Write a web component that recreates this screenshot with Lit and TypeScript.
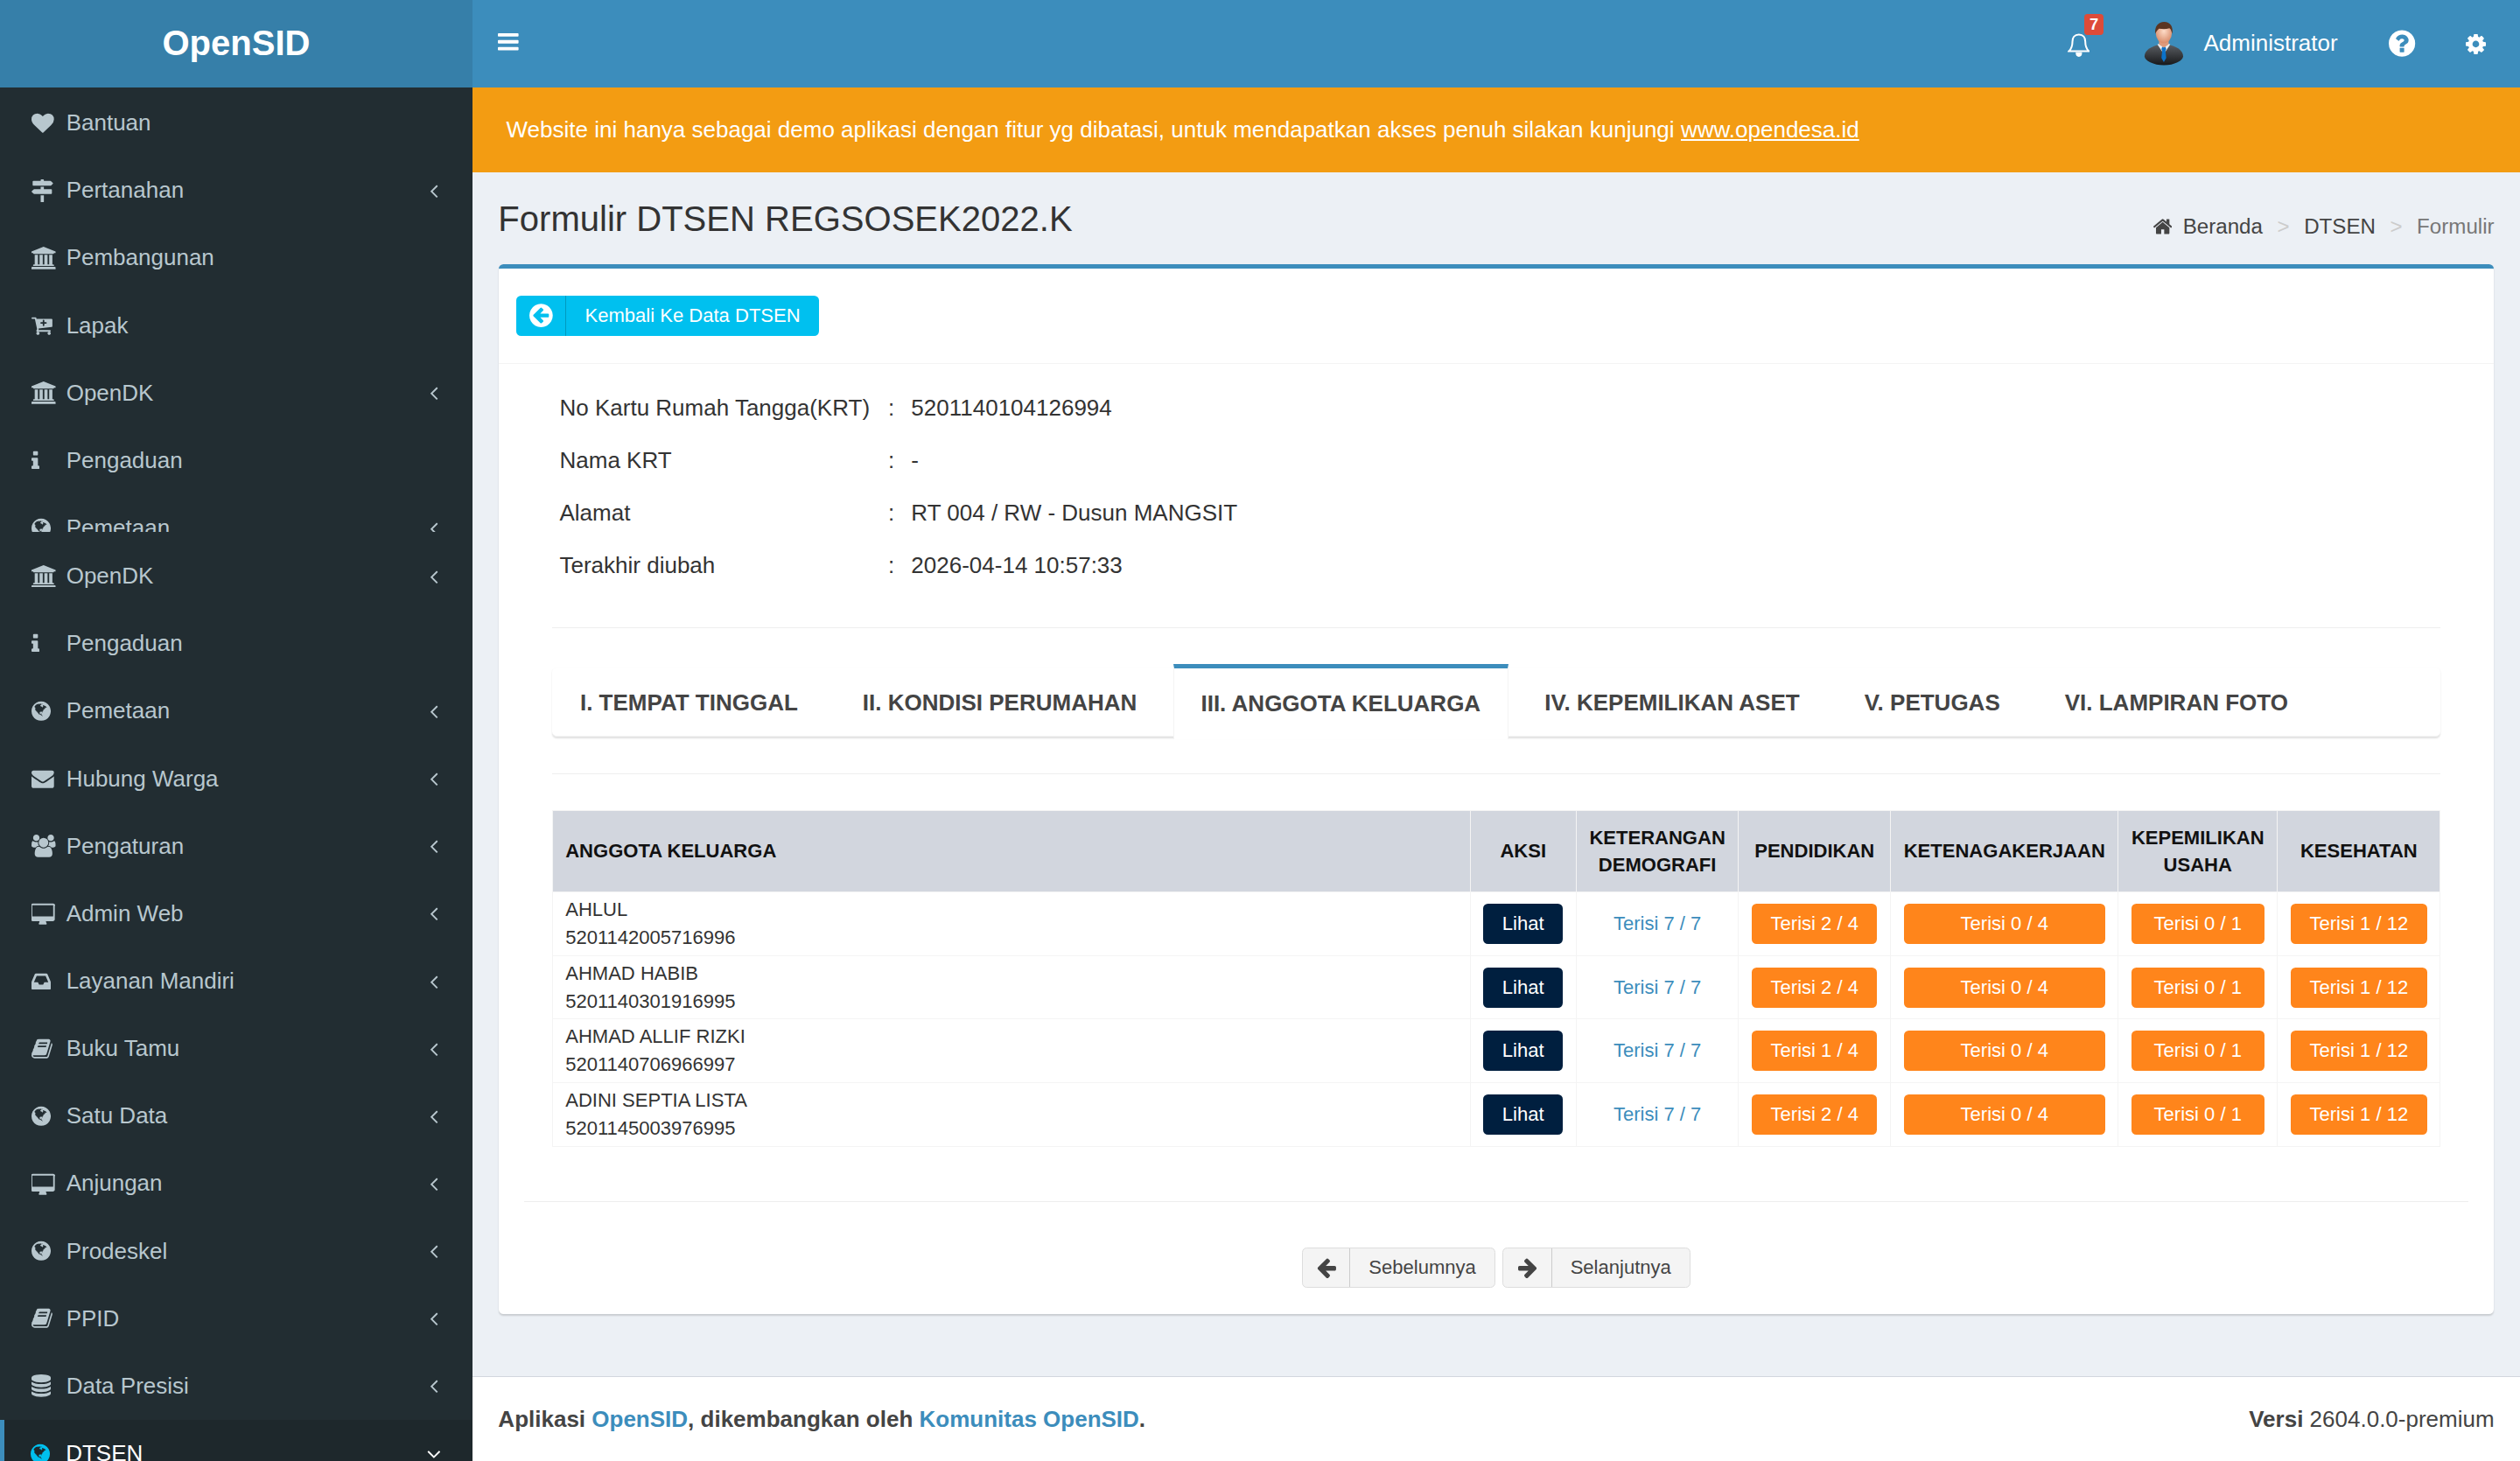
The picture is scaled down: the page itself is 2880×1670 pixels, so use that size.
import { LitElement, html, css } from 'lit'
import { customElement } from 'lit/decorators.js'

type Glyph = { d: string; x: number; w: number; y?: number }

const G: Record<string, Glyph> = {
  heart: { x: 0, w: 1792, d: 'M896 1664q-26 0-44-18l-624-602q-10-8-27.5-26t-55.5-65.5-68-97.5-53.5-121-23.5-138q0-220 127-344t351-124q62 0 126.5 21.5t120 58 95.5 68.5 76 68q36-36 76-68t95.5-68.5 120-58 126.5-21.5q224 0 351 124t127 344q0 221-229 450l-623 600q-18 18-44 18z' },
  signs: { x: 37, w: 1718, d: 'M1745 297q10 10 10 23t-10 23l-141 141q-28 28-68 28h-1344q-26 0-45-19t-19-45v-256q0-26 19-45t45-19h576v-64q0-26 19-45t45-19h128q26 0 45 19t19 45v64h512q40 0 68 28zm-977 967h256v512q0 26-19 45t-45 19h-128q-26 0-45-19t-19-45v-512zm832-480q26 0 45 19t19 45v256q0 26-19 45t-45 19h-1344q-40 0-68-28l-141-141q-10-10-10-23t10-23l141-141q28-28 68-28h512v-192h256v192h576z' },
  bank: { x: 0, w: 1920, d: 'M960 0l960 384v128h-128q0 26-20.5 45t-48.5 19h-1526q-28 0-48.5-19t-20.5-45h-128v-128zm-704 640h256v768h128v-768h256v768h128v-768h256v768h128v-768h256v768h59q28 0 48.5 19t20.5 45v64h-1664v-64q0-26 20.5-45t48.5-19h59v-768zm1595 960q28 0 48.5 19t20.5 45v128h-1920v-128q0-26 20.5-45t48.5-19h1782z' },
  cart: { x: 0, w: 1664, d: 'M1216 704q0-26-19-45t-45-19h-128v-128q0-26-19-45t-45-19-45 19-19 45v128h-128q-26 0-45 19t-19 45 19 45 45 19h128v128q0 26 19 45t45 19 45-19 19-45v-128h128q26 0 45-19t19-45zm-576 832q0 53-37.5 90.5t-90.5 37.5-90.5-37.5-37.5-90.5 37.5-90.5 90.5-37.5 90.5 37.5 37.5 90.5zm896 0q0 53-37.5 90.5t-90.5 37.5-90.5-37.5-37.5-90.5 37.5-90.5 90.5-37.5 90.5 37.5 37.5 90.5zm128-1088v512q0 24-16 42.5t-41 21.5l-1044 122q1 7 4.5 21.5t6 26.5 2.5 22q0 16-24 64h920q26 0 45 19t19 45-19 45-45 19h-1024q-26 0-45-19t-19-45q0-14 11-39.5t29.5-59.5 20.5-38l-177-823h-204q-26 0-45-19t-19-45 19-45 45-19h256q16 0 28.5 6.5t20 15.5 13 24.5 7.5 26.5 5.5 29.5 4.5 25.5h1201q26 0 45 19t19 45z' },
  info: { x: 576, w: 640, d: 'M1216 1344v128q0 26-19 45t-45 19h-512q-26 0-45-19t-19-45v-128q0-26 19-45t45-19h64v-384h-64q-26 0-45-19t-19-45v-128q0-26 19-45t45-19h384q26 0 45 19t19 45v576h64q26 0 45 19t19 45zm-128-1152v192q0 26-19 45t-45 19h-256q-26 0-45-19t-19-45v-192q0-26 19-45t45-19h256q26 0 45 19t19 45z' },
  globe: { x: 128, w: 1536, d: 'M896 128q209 0 385.5 103t279.5 279.5 103 385.5-103 385.5-279.5 279.5-385.5 103-385.5-103-279.5-279.5-103-385.5 103-385.5 279.5-279.5 385.5-103zm274 521q-2 1-9.5 9.5t-13.5 9.5q2 0 4.5-5t5-11 3.5-7q6-7 22-15 14-6 52-12 34-8 51 11-2-2 9.5-13t14.5-12q3-2 15-4.5t15-7.5l2-22q-12 1-17.5-7t-6.5-21q0 2-6 8 0-7-4.5-8t-11.5 1-9 1q-10-3-15-7.5t-8-16.5-4-15q-2-5-9.5-11t-9.5-10q-1-2-2.5-5.5t-3-6.5-4-5.5-5.5-2.5-7 5-7.5 10-4.5 5q-3-2-6-1.5t-4.5 1-4.5 3-5 3.5q-3 2-8.5 3t-8.5 2q15-5-1-11-10-4-16-3 9-4 7.5-12t-8.5-14h5q-1-4-8.5-8.5t-17.5-8.5-13-6q-8-5-34-9.5t-33-.5q-5 6-4.5 10.5t4 14 3.5 12.5q1 6-5.5 13t-6.5 12q0 7 14 15.5t10 21.5q-3 8-16 16t-16 12q-5 8-1.5 18.5t10.5 16.5q2 2 1.5 4t-3.5 4.5-5.5 4-6.5 3.5l-3 2q-11 5-20.5-6t-13.5-26q-7-25-16-30-23-8-29 1-5-13-41-26-25-9-58-4 6-1 0-15-7-15-19-12 3-6 4-17.5t1-13.5q3-13 12-23 1-1 7-8.5t9.5-13.5.5-6q35 4 50-11 5-5 11.5-17t10.5-17q9-6 14-5.5t14.5 5.5 14.5 5q14 1 15.5-11t-7.5-20q12 1 3-17-5-7-8-9-12-4-27 5-8 4 2 8-1-1-9.5 10.5t-16.5 17.5-14-5q-1-1-5.5-13.5t-9.5-13.5q-8 0-16 15 3-8-11-15t-24-8q19-12-8-27-7-4-20.5-5t-19.5 4q-5 7-5.5 11.5t5 8 10.5 5.5 11.5 4 8.5 3q14 10 8 14-2 1-8.5 3.5t-11.5 4.5-6 4q-3 4 0 14t-2 14q-5-5-9-17.5t-7-16.5q7 9-25 6l-10-1q-4 0-16 2t-20.5 1-13.5-8q-4-8 0-20 1-4 4-2-4-3-11-9.5t-10-8.5q-46 15-94 41 6 1 12-1 5-2 13-6.5t10-5.5q34-14 42-7l5-5q14 16 20 25-7-4-30-1-20 6-22 12 7 12 5 18-4-3-11.5-10t-14.5-11-15-5q-16 0-22 1-146 80-235 222 7 7 12 8 4 1 5 9t2.5 11 11.5-3q9 8 3 19 1-1 44 27 19 17 21 21 3 11-10 18-1-2-9-9t-9-4q-3 5 .5 18.5t10.5 12.5q-7 0-9.5 16t-2.5 35.5-1 23.5l2 1q-3 12 5.5 34.5t21.5 19.5q-13 3 20 43 6 8 8 9 3 2 12 7.5t15 10 10 10.5q4 5 10 22.5t14 23.5q-2 6 9.5 20t10.5 23q-1 0-2.5 1t-2.5 1q3 7 15.5 14t15.5 13q1 3 2 10t3 11 8 2q2-20-24-62-15-25-17-29-3-5-5.5-15.5t-4.5-14.5q2 0 6 1.5t8.5 3.5 7.5 4 2 3q-3 7 2 17.5t12 18.5 17 19 12 13q6 6 14 19.5t0 13.5q9 0 20 10.5t17 19.5q5 8 8 26t5 24q2 7 8.5 13.5t12.5 9.5l16 8 13 7q5 2 18.5 10.5t21.5 11.5q10 4 16 4t14.5-2.5 13.5-3.5q15-2 29 15t21 21q36 19 55 11-2 1 .5 7.5t8 15.5 9 14.5 5.5 8.5q5 6 18 15t18 15q6-4 7-9-3 8 7 20t18 10q14-3 14-32-31 15-49-18 0-1-2.5-5.5t-4-8.5-2.5-8.5 0-7.5 5-3q9 0 10-3.5t-2-12.5-4-13q-1-8-11-20t-12-15q-5 9-16 8t-16-9q0 1-1.5 5.5t-1.5 6.5q-13 0-15-1 1-3 2.5-17.5t3.5-22.5q1-4 5.5-12t7.5-14.5 4-12.5-4.5-9.5-17.5-2.5q-19 1-26 20-1 3-3 10.5t-5 11.5-9 7q-7 3-24 2t-24-5q-13-8-22.5-29t-9.5-37q0-10 2.5-26.5t3-25-5.5-24.5q3-2 9-9.5t10-10.5q2-1 4.5-1.5t4.5 0 4-1.5 3-6q-1-1-4-3-3-3-4-3 7 3 28.5-1.5t27.5 1.5q15 11 22-2 0-1-2.5-9.5t-.5-13.5q5 27 29 9 3 3 15.5 5t17.5 5q3 2 7 5.5t5.5 4.5 5-.5 8.5-6.5q10 14 12 24 11 40 19 44 7 3 11 2t4.5-9.5 0-14-1.5-12.5l-1-8v-18l-1-8q-15-3-18.5-12t1.5-18.5 15-18.5q1-1 8-3.5t15.5-6.5 12.5-8q21-19 15-35 7 0 11-9-1 0-5-3t-7.5-5-4.5-2q9-5 2-16 5-3 7.5-11t7.5-10q9 12 21 2 8-8 1-16 5-7 20.5-10.5t18.5-9.5q7 2 8-2t1-12 3-12q4-5 15-9t13-5l17-11q3-4 0-4 18 2 31-11 10-11-6-20 3-6-3-9.5t-15-5.5q3-1 11.5-.5t10.5-1.5q15-10-7-16-17-5-43 12z' },
  mail: { x: 0, w: 1792, d: 'M1792 710v794q0 66-47 113t-113 47h-1472q-66 0-113-47t-47-113v-794q44 49 101 87 362 246 497 345 57 42 92.5 65.5t94.5 48 110 24.5h2q51 0 110-24.5t94.5-48 92.5-65.5q170-123 498-345 57-39 100-87zm0-294q0 79-49 151t-122 123q-376 261-468 325-10 7-42.5 30.5t-54 38-52 32.5-57.5 27-50 9h-2q-23 0-50-9t-57.5-27-52-32.5-54-38-42.5-30.5q-91-64-262-182.5t-205-142.5q-62-42-117-115.5t-55-136.5q0-78 41.5-130t118.5-52h1472q65 0 112.5 47t47.5 113z' },
  users: { x: 0, w: 1920, d: 'M593 896q-162 5-265 128h-134q-82 0-138-40.5t-56-118.5q0-353 124-353 6 0 43.5 21t97.5 42.5 119 21.5q67 0 133-23-5 37-5 66 0 139 81 256zm1071 637q0 120-73 189.5t-194 69.5h-874q-121 0-194-69.5t-73-189.5q0-53 3.5-103.5t14-109 26.5-108.5 43-97.5 62-81 85.5-53.5 111.5-20q10 0 43 21.5t73 48 107 48 135 21.5 135-21.5 107-48 73-48 43-21.5q61 0 111.5 20t85.5 53.5 62 81 43 97.5 26.5 108.5 14 109 3.5 103.5zm-1024-1277q0 106-75 181t-181 75-181-75-75-181 75-181 181-75 181 75 75 181zm704 384q0 159-112.5 271.5t-271.5 112.5-271.5-112.5-112.5-271.5 112.5-271.5 271.5-112.5 271.5 112.5 112.5 271.5zm576 225q0 78-56 118.5t-138 40.5h-134q-103-123-265-128 81-117 81-256 0-29-5-66 66 23 133 23 59 0 119-21.5t97.5-42.5 43.5-21q124 0 124 353zm-128-609q0 106-75 181t-181 75-181-75-75-181 75-181 181-75 181 75 75 181z' },
  desktop: { x: 0, w: 1856, y: -128, d: 'M1728 992v-832q0-13-9.5-22.5t-22.5-9.5h-1600q-13 0-22.5 9.5t-9.5 22.5v832q0 13 9.5 22.5t22.5 9.5h1600q13 0 22.5-9.5t9.5-22.5zm128-832v1088q0 66-47 113t-113 47h-544q0 37 16 77.5t32 71 16 43.5q0 26-19 45t-45 19h-512q-26 0-45-19t-19-45q0-14 16-44t32-70 16-78h-544q-66 0-113-47t-47-113v-1088q0-66 47-113t113-47h1632q66 0 113 47t47 113z' },
  inbox: { x: 0, w: 1536, d: 'M1023 960h316q-1-3-2.5-8.5t-2.5-7.5l-212-496h-708l-212 496q-1 3-2.5 8.5t-2.5 7.5h316l95 192h320zm513 30v482q0 26-19 45t-45 19h-1408q-26 0-45-19t-19-45v-482q0-62 25-123l238-552q10-25 36.5-42t52.5-17h832q26 0 52.5 17t36.5 42l238 552q25 61 25 123z' },
  book: { x: 0, w: 1664, d: 'M1639 478q40 57 18 129l-275 906q-19 64-76.5 107.5t-122.5 43.5h-923q-77 0-148.5-53.5t-99.5-131.5q-24-67-2-127 0-4 3-27t4-37q1-8-3-21.5t-3-19.5q2-11 8-21t16.5-23.5 16.5-23.5q23-38 45-91.5t30-91.5q3-10 .5-30t-.5-28q3-11 17-28t17-23q21-36 42-92t25-90q1-9-2.5-32t.5-28q4-13 22-30.5t22-22.5q19-26 42.5-84.5t27.5-96.5q1-8-3-25.5t-2-26.5q2-8 9-18t18-23 17-21q8-12 16.5-30.5t15-35 16-36 19.5-32 26.5-23.5 36-11.5 47.5 5.5l-1 3q38-9 51-9h761q74 0 114 56t18 130l-274 906q-36 119-71.5 153.5t-128.5 34.5h-869q-27 0-38 15-11 16-1 43 24 70 144 70h923q29 0 56-15.5t35-41.5l300-987q7-22 5-57 38 15 59 43zm-1064 2q-4 13 2 22.5t20 9.5h608q13 0 25.5-9.5t16.5-22.5l21-64q4-13-2-22.5t-20-9.5h-608q-13 0-25.5 9.5t-16.5 22.5zm-83 256q-4 13 2 22.5t20 9.5h608q13 0 25.5-9.5t16.5-22.5l21-64q4-13-2-22.5t-20-9.5h-608q-13 0-25.5 9.5t-16.5 22.5z' },
  db: { x: 128, w: 1536, d: 'M896 768q237 0 443-43t325-127v170q0 69-103 128t-280 93.5-385 34.5-385-34.5-280-93.5-103-128v-170q119 84 325 127t443 43zm0 768q237 0 443-43t325-127v170q0 69-103 128t-280 93.5-385 34.5-385-34.5-280-93.5-103-128v-170q119 84 325 127t443 43zm0-384q237 0 443-43t325-127v170q0 69-103 128t-280 93.5-385 34.5-385-34.5-280-93.5-103-128v-170q119 84 325 127t443 43zm0-1152q208 0 385 34.5t280 93.5 103 128v128q0 69-103 128t-280 93.5-385 34.5-385-34.5-280-93.5-103-128v-128q0-69 103-128t280-93.5 385-34.5z' },
  left: { x: 0, w: 1792, d: 'M1203 544q0 13-10 23l-393 393 393 393q10 10 10 23t-10 23l-50 50q-10 10-23 10t-23-10l-466-466q-10-10-10-23t10-23l466-466q10-10 23-10t23 10l50 50q10 10 10 23z' },
  down: { x: 0, w: 1792, d: 'M1395 736q0 13-10 23l-466 466q-10 10-23 10t-23-10l-466-466q-10-10-10-23t10-23l50-50q10-10 23-10t23 10l393 393 393-393q10-10 23-10t23 10l50 50q10 10 10 23z' },
  bars: { x: 128, w: 1536, d: 'M1664 1344v128q0 26-19 45t-45 19h-1408q-26 0-45-19t-19-45v-128q0-26 19-45t45-19h1408q26 0 45 19t19 45zm0-512v128q0 26-19 45t-45 19h-1408q-26 0-45-19t-19-45v-128q0-26 19-45t45-19h1408q26 0 45 19t19 45zm0-512v128q0 26-19 45t-45 19h-1408q-26 0-45-19t-19-45v-128q0-26 19-45t45-19h1408q26 0 45 19t19 45z' },
  home: { x: 96, w: 1600, d: 'M1472 992v480q0 26-19 45t-45 19h-384v-384h-256v384h-384q-26 0-45-19t-19-45v-480q0-1 .5-3t.5-3l575-474 575 474q1 2 1 6zm223-69l-62 74q-8 9-21 11h-3q-13 0-21-7l-692-577-692 577q-12 8-24 7-13-2-21-11l-62-74q-8-10-7-23.5t11-21.5l719-599q32-26 76-26t76 26l244 204v-195q0-14 9-23t23-9h192q14 0 23 9t9 23v408l219 182q10 8 11 21.5t-7 23.5z' },
  question: { x: 128, w: 1536, d: 'M1024 1376v-192q0-14-9-23t-23-9h-192q-14 0-23 9t-9 23v192q0 14 9 23t23 9h192q14 0 23-9t9-23zm256-672q0-88-55.5-163t-138.5-116-170-41q-243 0-371 213-15 24 8 42l132 100q7 6 19 6 16 0 25-12 53-68 86-92 34-24 86-24 48 0 85.5 26t37.5 59q0 38-20 61t-68 45q-63 28-115.5 86.5t-52.5 125.5v36q0 14 9 23t23 9h192q14 0 23-9t9-23q0-19 21.5-49.5t54.5-49.5q32-18 49-28.5t46-35 44.5-48 28-60.5 12.5-81zm384 192q0 209-103 385.5t-279.5 279.5-385.5 103-385.5-103-279.5-279.5-103-385.5 103-385.5 279.5-279.5 385.5-103 385.5 103 279.5 279.5 103 385.5z' },
  cog: { x: 128, w: 1536, d: 'M1152 896q0-106-75-181t-181-75-181 75-75 181 75 181 181 75 181-75 75-181zm512-109v222q0 12-8 23t-20 13l-185 28q-19 54-39 91 35 50 107 138 10 12 10 25t-9 23q-27 37-99 108t-94 71q-12 0-26-9l-138-108q-44 23-91 38-16 136-29 186-7 28-36 28h-222q-14 0-24.5-8.5t-11.5-21.5l-28-184q-49-16-90-37l-141 107q-10 9-25 9-14 0-25-11-126-114-165-168-7-10-7-23 0-12 8-23 15-21 51-66.5t54-70.5q-27-50-41-99l-183-27q-13-2-21-12.5t-8-23.5v-222q0-12 8-23t19-13l186-28q14-46 39-92-40-57-107-138-10-12-10-24 0-10 9-23 26-36 98.5-107.5t94.5-71.5q13 0 26 10l138 107q44-23 91-38 16-136 29-186 7-28 36-28h222q14 0 24.5 8.5t11.5 21.5l28 184q49 16 90 37l142-107q9-9 24-9 13 0 25 10 129 119 165 170 7 8 7 22 0 12-8 23-15 21-51 66.5t-54 70.5q26 50 41 98l183 28q13 2 21 12.5t8 23.5z' },
  circleLeft: { x: 128, w: 1536, d: 'M1408 960v-128q0-26-19-45t-45-19h-502l189-189q19-19 19-45t-19-45l-91-91q-18-18-45-18t-45 18l-362 362-91 91q-18 18-18 45t18 45l91 91 362 362q18 18 45 18t45-18l91-91q18-18 18-45t-18-45l-189-189h502q26 0 45-19t19-45zm256-64q0 209-103 385.5t-279.5 279.5-385.5 103-385.5-103-279.5-279.5-103-385.5 103-385.5 279.5-279.5 385.5-103 385.5 103 279.5 279.5 103 385.5z' },
  arrowLeft: { x: 64, w: 1600, d: 'M1664 896v128q0 53-32.5 90.5t-84.5 37.5h-704l293 294q38 36 38 90t-38 90l-75 76q-37 37-90 37-52 0-91-37l-651-652q-37-37-37-90 0-52 37-91l651-650q38-38 91-38 52 0 90 38l75 74q38 38 38 91t-38 91l-293 293h704q52 0 84.5 37.5t32.5 90.5z' },
  arrowRight: { x: 128, w: 1536, d: 'M1600 960q0 54-37 91l-651 651q-39 37-91 37-51 0-90-37l-75-75q-38-38-38-91t38-91l293-293h-704q-52 0-84.5-37.5t-32.5-90.5v-128q0-53 32.5-90.5t84.5-37.5h704l-293-294q-38-36-38-90t38-90l75-75q38-38 90-38 53 0 91 38l651 651q37 35 37 90z' },
}

const ic = (name: string, size = 14) => {
  const g = G[name]
  return html`<svg class="ic" viewBox="${g.x} ${g.y ?? 0} ${g.w} 1792" width=${(g.w / 1792) * size} height=${size} fill="currentColor"><path d=${g.d}></path></svg>`
}

const firstMenu: [string, string, boolean][] = [
  ['heart', 'Bantuan', false],
  ['signs', 'Pertanahan', true],
  ['bank', 'Pembangunan', false],
  ['cart', 'Lapak', false],
  ['bank', 'OpenDK', true],
  ['info', 'Pengaduan', false],
  ['globe', 'Pemetaan', true],
]

const secondMenu: [string, string, boolean][] = [
  ['bank', 'OpenDK', true],
  ['info', 'Pengaduan', false],
  ['globe', 'Pemetaan', true],
  ['mail', 'Hubung Warga', true],
  ['users', 'Pengaturan', true],
  ['desktop', 'Admin Web', true],
  ['inbox', 'Layanan Mandiri', true],
  ['book', 'Buku Tamu', true],
  ['globe', 'Satu Data', true],
  ['desktop', 'Anjungan', true],
  ['globe', 'Prodeskel', true],
  ['book', 'PPID', true],
  ['db', 'Data Presisi', true],
]

const tabs = ['I. TEMPAT TINGGAL', 'II. KONDISI PERUMAHAN', 'III. ANGGOTA KELUARGA', 'IV. KEPEMILIKAN ASET', 'V. PETUGAS', 'VI. LAMPIRAN FOTO']

const members = [
  { name: 'AHLUL', id: '5201142005716996', edu: 'Terisi 2 / 4' },
  { name: 'AHMAD HABIB', id: '5201140301916995', edu: 'Terisi 2 / 4' },
  { name: 'AHMAD ALLIF RIZKI', id: '5201140706966997', edu: 'Terisi 1 / 4' },
  { name: 'ADINI SEPTIA LISTA', id: '5201145003976995', edu: 'Terisi 2 / 4' },
]

const info = [
  ['No Kartu Rumah Tangga(KRT)', '5201140104126994'],
  ['Nama KRT', '-'],
  ['Alamat', 'RT 004 / RW - Dusun MANGSIT'],
  ['Terakhir diubah', '2026-04-14 10:57:33'],
]

@customElement('app-root')
export class AppRoot extends LitElement {
  static styles = css`
    /* the layout below is in units of a 1568 wide page */
    :host {
      display: block;
      width: 1568px;
      height: 909.2px;
      zoom: 1.83673;
      overflow: hidden;
      font-family: 'Liberation Sans', Arial, sans-serif;
      font-size: 14.16px;
      color: #333;
    }
    * { box-sizing: border-box; }
    .ic { display: block; flex: none; }

    .page { display: flex; height: 100%; background: #ecf0f5; }

    .side { width: 294px; flex: none; height: 100%; background: #222d32; overflow: hidden; display: flex; flex-direction: column; }
    .logo { height: 54.4px; flex: none; background: #367fa9; color: #fff; font-size: 21.8px; font-weight: 700; display: flex; align-items: center; justify-content: center; }
    .menu { flex: none; }
    .menu.top { height: 276.6px; overflow: hidden; padding-top: 1.2px; }
    .menu.bottom { margin-top: 6.6px; }
    .item { height: 42px; display: flex; align-items: center; padding: 0 17px 0 19.6px; color: #b8c7ce; }
    .item .slot { width: 21.6px; flex: none; }
    .item .chev { margin-left: auto; }
    .item.active { background: #1e282c; color: #fff; border-left: 3px solid #3c8dbc; padding-left: 16.6px; }
    .item.active .slot { color: #00c0ef; }

    .main { flex: 1; min-width: 0; height: 100%; display: flex; flex-direction: column; }

    .nav { height: 54.4px; flex: none; background: #3c8dbc; color: #fff; display: flex; align-items: center; padding: 0 21.5px 0 16px; }
    .burger { margin-bottom: 2px; }
    .bell { position: relative; margin-left: auto; width: 14px; height: 14px; }
    .badge { position: absolute; left: 10.5px; top: -11.5px; width: 12px; height: 13px; border-radius: 2px; background: #dd4b39; color: #fff; font-size: 10px; font-weight: 700; line-height: 13px; text-align: center; }
    .avatar { margin-left: 33.5px; }
    .user { margin-left: 12.3px; }
    .help { margin-left: 32px; }
    .gear { margin-left: 31px; }

    .notice { height: 52.9px; flex: none; background: #f39c12; color: #fff; display: flex; align-items: center; padding-left: 21px; }
    .notice a { color: #fff; text-decoration: underline; margin-left: 4px; }

    .head { height: 57.1px; flex: none; display: flex; justify-content: space-between; padding: 16.7px 16px 0 16px; }
    .head h1 { margin: 0; font-size: 21.8px; font-weight: 400; line-height: 24px; color: #333; }
    .crumbs { display: flex; align-items: center; gap: 9px; height: 18px; margin-top: 8px; font-size: 13.15px; color: #444; }
    .crumbs .home { margin-right: -2px; }
    .crumbs .sep { color: #ccc; }
    .crumbs .last { color: #777; }

    .box { flex: none; height: 653.3px; margin: 0 16.3px; background: #fff; border-top: 3px solid #3c8dbc; border-radius: 3px; box-shadow: 0 1px 1px rgba(0, 0, 0, 0.15); }
    .box-head { padding: 16.9px 11.2px 16.8px; border-bottom: 1px solid #f4f4f4; }
    .back { width: 188.1px; height: 25px; display: flex; align-items: center; background: #00c0ef; color: #fff; font-size: 12px; border-radius: 3px; }
    .back .glyph { width: 31px; height: 100%; display: flex; align-items: center; justify-content: center; border-right: 1px solid rgba(0, 0, 0, 0.2); }
    .back span { margin-left: 11.5px; }

    .body { padding: 11.3px 15.7px 0; }
    .inner { padding: 0 17.3px 0; }
    .row { height: 32.7px; display: flex; align-items: center; padding-left: 4.9px; }
    .row .label { width: 204.5px; }
    .row .colon { width: 14.3px; }

    hr { border: 0; border-top: 1px solid #eee; margin: 0; }
    .hr1 { margin-top: 22px; }
    .hr2 { margin-top: 22.7px; }

    .tabs { display: flex; height: 43px; margin-top: 24.7px; background: #fff; border-radius: 3px; box-shadow: 0 1px 1px rgba(0, 0, 0, 0.12); border-bottom: 1px solid #f4f4f4; }
    .tab { display: flex; align-items: center; margin-right: 5px; padding: 1.5px 17.65px 0; font-weight: 700; color: #444; }
    .tab.active { margin: -2.6px 5px -2px 0; padding: 0 16.65px; background: #fff; border-top: 3px solid #3c8dbc; border-left: 1px solid #f4f4f4; border-right: 1px solid #f4f4f4; }

    table { width: 100%; margin-top: 22.1px; border-collapse: collapse; table-layout: fixed; font-size: 12px; }
    .c0 { width: 571.2px; }
    .c1 { width: 66px; }
    .c2 { width: 101px; }
    .c3 { width: 94.6px; }
    .c4 { width: 141.7px; }
    .c5 { width: 99px; }
    th { height: 51px; padding: 0 4px; background: #d2d6de; color: #111; font-weight: 700; line-height: 17px; text-align: center; border: 1px solid #f4f4f4; }
    th.name { text-align: left; padding-left: 8px; }
    td { height: 39.5px; padding: 0 8px; line-height: 17.4px; color: #333; border: 1px solid #f4f4f4; text-align: center; }
    td.name { text-align: left; }
    td.fill { color: #3c8dbc; }
    .btn { display: block; height: 25px; line-height: 25px; color: #fff; text-align: center; border-radius: 3px; }
    .btn.navy { background: #001f3f; }
    .btn.orange { background: #ff851b; }

    .foot-line { margin-top: 34px; }
    .pager { display: flex; justify-content: center; gap: 4.7px; margin-top: 28.3px; }
    .pg { height: 25px; display: flex; align-items: center; background: #f4f4f4; border: 1px solid #ddd; border-radius: 3px; font-size: 12px; color: #444; }
    .pg .glyph { width: 30.9px; height: 100%; display: flex; align-items: center; justify-content: center; border-right: 1px solid #ccc; }
    .pg span { padding: 0 11.4px; }
    .pg.prev { width: 120.1px; }
    .pg.next { width: 116.7px; }

    .footer { margin-top: auto; height: 52.6px; flex: none; background: #fff; border-top: 1px solid #d2d6de; display: flex; align-items: center; justify-content: space-between; padding: 0 16px; color: #444; }
    .footer b a { color: #3c8dbc; text-decoration: none; }
    .footer .ver { font-weight: 400; }
  `

  private item(icon: string, label: string, chev: boolean) {
    return html`<div class="item">
      <span class="slot">${ic(icon)}</span>
      <span>${label}</span>
      ${chev ? html`<span class="chev">${ic('left')}</span>` : ''}
    </div>`
  }

  private avatar() {
    return html`<svg class="avatar" viewBox="0 0 50 54" width="25" height="27">
      <defs>
        <radialGradient id="skin" cx="0.5" cy="0.4" r="0.6"><stop offset="0" stop-color="#fddcc8"></stop><stop offset="1" stop-color="#d98c6a"></stop></radialGradient>
        <linearGradient id="suit" x1="0" y1="0" x2="0" y2="1"><stop offset="0" stop-color="#5d6166"></stop><stop offset="1" stop-color="#17181a"></stop></linearGradient>
      </defs>
      <path d="M1 43c0-7 6-11 15-14l9-2 9 2c9 3 15 7 15 14 0 5-11 11-24 11S1 48 1 43z" fill="url(#suit)"></path>
      <path d="M17 28l8 12 8-12-8-3z" fill="#e8eef2"></path>
      <path d="M23 31h4l1 3-1 2 1 9-3 5-3-5 1-9-1-2z" fill="#0b72c9"></path>
      <path d="M19 21h12v7l-6 4-6-4z" fill="#dd9a7c"></path>
      <ellipse cx="25" cy="14" rx="10" ry="12.5" fill="url(#skin)"></ellipse>
      <path d="M14.5 15C13 6 18 0 25.500 0S37 6 35.500 15c-1-3-1.500-6-3.500-7-5 1.500-9 1-13 .5-2 1.500-3.500 3.500-4.500 6.500z" fill="#5b3522"></path>
    </svg>`
  }

  render() {
    return html`
      <div class="page">
        <aside class="side">
          <div class="logo">OpenSID</div>
          <div class="menu top">${firstMenu.map(([i, t, c]) => this.item(i, t, c))}</div>
          <div class="menu bottom">
            ${secondMenu.map(([i, t, c]) => this.item(i, t, c))}
            <div class="item active">
              <span class="slot">${ic('globe')}</span>
              <span>DTSEN</span>
              <span class="chev">${ic('down')}</span>
            </div>
          </div>
        </aside>

        <div class="main">
          <header class="nav">
            <span class="burger">${ic('bars', 15)}</span>
            <div class="bell">
              <svg class="ic" viewBox="0 0 14 16" width="14" height="16" fill="none" stroke="#fff" stroke-width="1.100">
                <path d="M7 1.400c2.800 0 4 2.100 4 4.300 0 3 .8 4.700 2.200 6H.8c1.400-1.300 2.200-3 2.200-6 0-2.200 1.200-4.300 4-4.300z"></path>
                <path d="M5.600 13c0 1 .6 1.700 1.400 1.700s1.400-.7 1.400-1.700z" fill="#fff"></path>
              </svg>
              <span class="badge">7</span>
            </div>
            ${this.avatar()}
            <span class="user">Administrator</span>
            <span class="help">${ic('question', 19.2)}</span>
            <span class="gear">${ic('cog', 14.6)}</span>
          </header>

          <div class="notice">Website ini hanya sebagai demo aplikasi dengan fitur yg dibatasi, untuk mendapatkan akses penuh silakan kunjungi <a>www.opendesa.id</a></div>

          <div class="head">
            <h1>Formulir DTSEN REGSOSEK2022.K</h1>
            <div class="crumbs">
              <span class="home">${ic('home', 13)}</span>
              <span>Beranda</span>
              <span class="sep">&gt;</span>
              <span>DTSEN</span>
              <span class="sep">&gt;</span>
              <span class="last">Formulir</span>
            </div>
          </div>

          <section class="box">
            <div class="box-head">
              <div class="back"><div class="glyph">${ic('circleLeft', 17)}</div><span>Kembali Ke Data DTSEN</span></div>
            </div>
            <div class="body">
              <div class="inner">
                ${info.map(([l, v]) => html`<div class="row"><span class="label">${l}</span><span class="colon">:</span><span>${v}</span></div>`)}
                <hr class="hr1" />
                <div class="tabs">
                  ${tabs.map((t, i) => html`<div class="tab ${i === 2 ? 'active' : ''}">${t}</div>`)}
                </div>
                <hr class="hr2" />
                <table>
                  <colgroup>
                    <col class="c0" /><col class="c1" /><col class="c2" /><col class="c3" /><col class="c4" /><col class="c5" /><col />
                  </colgroup>
                  <thead>
                    <tr>
                      <th class="name">ANGGOTA KELUARGA</th>
                      <th>AKSI</th>
                      <th>KETERANGAN DEMOGRAFI</th>
                      <th>PENDIDIKAN</th>
                      <th>KETENAGAKERJAAN</th>
                      <th>KEPEMILIKAN USAHA</th>
                      <th>KESEHATAN</th>
                    </tr>
                  </thead>
                  <tbody>
                    ${members.map(
                      (m) => html`<tr>
                        <td class="name">${m.name}<br />${m.id}</td>
                        <td><a class="btn navy">Lihat</a></td>
                        <td class="fill">Terisi 7 / 7</td>
                        <td><a class="btn orange">${m.edu}</a></td>
                        <td><a class="btn orange">Terisi 0 / 4</a></td>
                        <td><a class="btn orange">Terisi 0 / 1</a></td>
                        <td><a class="btn orange">Terisi 1 / 12</a></td>
                      </tr>`,
                    )}
                  </tbody>
                </table>
              </div>
              <hr class="foot-line" />
              <div class="pager">
                <div class="pg prev"><div class="glyph">${ic('arrowLeft')}</div><span>Sebelumnya</span></div>
                <div class="pg next"><div class="glyph">${ic('arrowRight')}</div><span>Selanjutnya</span></div>
              </div>
            </div>
          </section>

          <footer class="footer">
            <b>Aplikasi <a>OpenSID</a>, dikembangkan oleh <a>Komunitas OpenSID</a>.</b>
            <span><b>Versi</b> <span class="ver">2604.0.0-premium</span></span>
          </footer>
        </div>
      </div>
    `
  }
}
